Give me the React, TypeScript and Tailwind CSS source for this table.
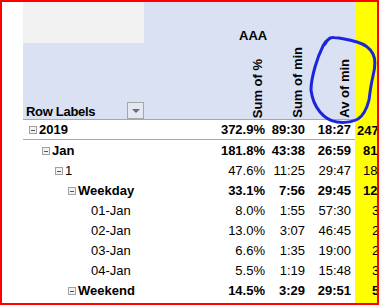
import type { ReactNode } from 'react';

type Row = {
  label: string;
  indent: string;
  bold: boolean;
  box: boolean;
  line?: boolean;
  values: [string, string, string];
  yellow: string;
  yellowPad: string;
};

const rows: Row[] = [
  { label: '2019', indent: 'pl-[6px]', bold: true, box: true, line: true, values: ['372.9%', '89:30', '18:27'], yellow: '247', yellowPad: 'pl-[2px]' },
  { label: 'Jan', indent: 'pl-[19px]', bold: true, box: true, values: ['181.8%', '43:38', '26:59'], yellow: '81', yellowPad: 'pl-[8px]' },
  { label: '1', indent: 'pl-[32px]', bold: false, box: true, values: ['47.6%', '11:25', '29:47'], yellow: '18', yellowPad: 'pl-[8px]' },
  { label: 'Weekday', indent: 'pl-[45px]', bold: true, box: true, values: ['33.1%', '7:56', '29:45'], yellow: '12', yellowPad: 'pl-[8px]' },
  { label: '01-Jan', indent: 'pl-[68px]', bold: false, box: false, values: ['8.0%', '1:55', '57:30'], yellow: '3', yellowPad: 'pl-[17px]' },
  { label: '02-Jan', indent: 'pl-[68px]', bold: false, box: false, values: ['13.0%', '3:07', '46:45'], yellow: '2', yellowPad: 'pl-[17px]' },
  { label: '03-Jan', indent: 'pl-[68px]', bold: false, box: false, values: ['6.6%', '1:35', '19:00'], yellow: '2', yellowPad: 'pl-[17px]' },
  { label: '04-Jan', indent: 'pl-[68px]', bold: false, box: false, values: ['5.5%', '1:19', '15:48'], yellow: '3', yellowPad: 'pl-[17px]' },
  { label: 'Weekend', indent: 'pl-[45px]', bold: true, box: true, values: ['14.5%', '3:29', '29:51'], yellow: '5', yellowPad: 'pl-[17px]' },
];

function MinusBox() {
  return (
    <span className="w-[8px] h-[8px] mr-[2px] mb-[5px] border border-[#a0a0a0] bg-[#f2f2f2] flex items-center justify-center shrink-0">
      <span className="w-[4px] h-[1px] bg-[#555555]" />
    </span>
  );
}

function VHead({ children }: { children: ReactNode }) {
  return (
    <div className="flex justify-end items-end pr-[3px] pb-[1px]">
      <span className="[writing-mode:vertical-rl] rotate-180 font-bold leading-[15px] whitespace-nowrap">{children}</span>
    </div>
  );
}

export default function App() {
  return (
    <div className="relative w-[379px] h-[305px] border-2 border-[#ff0000] bg-white flex overflow-hidden font-['Liberation_Sans',Arial,sans-serif] text-[13px] text-black">
      <div className="w-[21px] shrink-0" />

      <div className="w-[332px] shrink-0 flex flex-col">
        {/* header */}
        <div className="h-[118px] shrink-0 bg-[#d9e1f2] border-b border-[#8ea9db] flex">
          <div className="w-[195px] flex flex-col">
            <div className="w-[121px] h-[41px] bg-[#f2f2f2]" />
            <div className="flex-1" />
            <div className="w-[121px] h-[17px] flex items-end">
              <span className="flex-1 pl-[3px] font-bold leading-[15px] tracking-[-0.3px]">Row Labels</span>
              <span className="w-[17px] h-[17px] border border-[#a6a6a6] bg-[#e4e8f2] flex items-center justify-center">
                <span className="w-0 h-0 border-l-[4px] border-r-[4px] border-t-[4px] border-l-transparent border-r-transparent border-t-[#6b6b6b] mt-[1px]" />
              </span>
            </div>
          </div>
          <div className="flex-1 flex flex-col">
            <div className="pl-[21px] pt-[26px] font-bold leading-[15px]">AAA</div>
            <div className="flex-1 grid grid-cols-[50px_40px_47px]">
              <VHead>Sum of %</VHead>
              <VHead>Sum of min</VHead>
              <VHead>Av of min</VHead>
            </div>
          </div>
        </div>

        {/* body */}
        {rows.map((r) => (
          <div
            key={r.label}
            className={`h-[20px] shrink-0 flex items-end ${r.line ? 'border-b border-[#8ea9db]' : ''} ${r.bold ? 'font-bold' : ''}`}
          >
            <div className={`w-[195px] flex items-end ${r.indent}`}>
              {r.box && <MinusBox />}
              <span className="leading-[17px] pb-[1px]">{r.label}</span>
            </div>
            <div className="w-[50px] text-right pr-[3px] leading-[17px] pb-[1px]">{r.values[0]}</div>
            <div className="w-[40px] text-right pr-[3px] leading-[17px] pb-[1px]">{r.values[1]}</div>
            <div className="w-[47px] text-right pr-[4px] leading-[17px] pb-[1px]">{r.values[2]}</div>
          </div>
        ))}
      </div>

      {/* yellow column */}
      <div className="w-[24px] shrink-0 bg-[#ffff00] flex flex-col">
        <div className="h-[118px] shrink-0" />
        {rows.map((r) => (
          <div
            key={r.label}
            className={`h-[20px] shrink-0 flex items-end whitespace-nowrap ${r.yellowPad} ${r.bold ? 'font-bold' : ''}`}
          >
            <span className="leading-[17px] pb-[1px]">{r.yellow}</span>
          </div>
        ))}
      </div>

      {/* hand-drawn circle */}
      <svg className="absolute -left-[2px] -top-[2px] w-[379px] h-[305px] pointer-events-none" viewBox="0 0 379 305">
        <path
          d="M323 46 L325 44 C327 40 330 37 334 37.5 C342 38 350 40 357 42 C364 44 370 48 373 54 C376 60 375 68 373 76 C371 84 370 92 369 100 C367 108 364 115 358 119 C352 122 344 123 337 122 C330 121 325 118 320 112 C315 106 312 98 311 90 C311 82 313 74 315 67 C317 60 320 52 323 46 C325 42 327 40 330 38"
          fill="none"
          stroke="#1b26dc"
          strokeWidth={3}
          strokeLinecap="round"
          strokeLinejoin="round"
        />
      </svg>
    </div>
  );
}
